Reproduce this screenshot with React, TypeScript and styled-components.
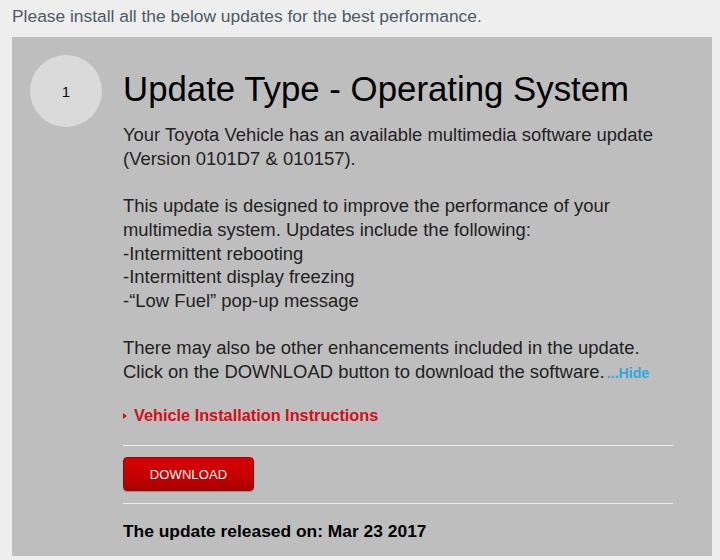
import React from "react";
import styled, { createGlobalStyle } from "styled-components";

const Global = createGlobalStyle`
  html, body { margin: 0; padding: 0; background: #eeeeee; }
  body { font-family: Arial, "Liberation Sans", Helvetica, sans-serif; }
`;

const Page = styled.div`
  padding: 5px 8px 0 12px;
  width: 720px;
  box-sizing: border-box;
`;

const Intro = styled.p`
  margin: 0 0 10px 0;
  font-size: 17.4px;
  line-height: 22px;
  color: #4c5a66;
`;

const Panel = styled.section`
  background: #bebebe;
  display: flex;
  gap: 21px;
  padding: 18px 39px 14px 18px;
  min-height: 516px;
  box-sizing: border-box;
`;

const StepCircle = styled.div`
  flex: none;
  width: 72px;
  height: 72px;
  border-radius: 50%;
  background: #dadada;
  display: flex;
  align-items: center;
  justify-content: center;
  font-size: 15px;
  color: #111;
`;

const Content = styled.div`
  width: 550px;
  display: flex;
  flex-direction: column;
`;

const Title = styled.h1`
  margin: 14px 0 14px 0;
  font-size: 34.8px;
  line-height: 40px;
  font-weight: normal;
  color: #000;
`;

const Paragraph = styled.p`
  margin: 0 0 23.7px 0;
  font-size: 18.45px;
  line-height: 23.7px;
  color: #222;
`;

const HideLink = styled.a`
  margin-left: 2px;
  font-size: 14.2px;
  font-weight: bold;
  color: #2fa9dc;
  text-decoration: none;
`;

const Instructions = styled.div`
  display: flex;
  align-items: center;
  gap: 7px;
  margin-top: -3px;
  font-size: 16.3px;
  font-weight: bold;
  color: #d0101a;
`;

const Caret = styled.span`
  width: 0;
  height: 0;
  border-top: 3.5px solid transparent;
  border-bottom: 3.5px solid transparent;
  border-left: 4px solid #d0101a;
`;

const Rule = styled.hr<{ $top: number; $bottom: number }>`
  border: none;
  border-top: 1px solid #ececec;
  margin: ${(p) => `${p.$top}px 0 ${p.$bottom}px 0`};
  width: 550px;
`;

const DownloadButton = styled.button`
  width: 131px;
  height: 34px;
  border: 1px solid #8e0a0a;
  border-radius: 4px;
  background: linear-gradient(to bottom, #d90000 0%, #c60000 55%, #a80000 100%);
  color: #fff;
  font-family: Arial, "Liberation Sans", sans-serif;
  font-size: 13px;
  letter-spacing: 0.1px;
  cursor: pointer;
  box-shadow: 0 1px 1px rgba(0, 0, 0, 0.25);
`;

const Released = styled.div`
  font-size: 17.4px;
  font-weight: bold;
  color: #000;
`;

export default function App() {
  return (
    <>
      <Global />
      <Page>
        <Intro>Please install all the below updates for the best performance.</Intro>
        <Panel>
          <StepCircle>1</StepCircle>
          <Content>
            <Title>Update Type - Operating System</Title>
            <Paragraph>
              Your Toyota Vehicle has an available multimedia software update (Version 0101D7 &amp; 010157).
            </Paragraph>
            <Paragraph>
              This update is designed to improve the performance of your multimedia system. Updates include the
              following:
              <br />
              -Intermittent rebooting
              <br />
              -Intermittent display freezing
              <br />
              -“Low Fuel” pop-up message
            </Paragraph>
            <Paragraph>
              There may also be other enhancements included in the update. Click on the DOWNLOAD button to download
              the software.<HideLink href="#">...Hide</HideLink>
            </Paragraph>
            <Instructions>
              <Caret />
              Vehicle Installation Instructions
            </Instructions>
            <Rule $top={20} $bottom={11} />
            <div>
              <DownloadButton>DOWNLOAD</DownloadButton>
            </div>
            <Rule $top={12} $bottom={17} />
            <Released>The update released on: Mar 23 2017</Released>
          </Content>
        </Panel>
      </Page>
    </>
  );
}
